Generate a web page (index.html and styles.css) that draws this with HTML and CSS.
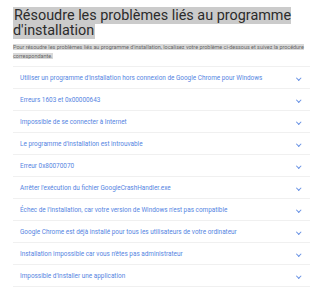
FILE: index.html
```html
<!DOCTYPE html>
<html lang="fr">
<head>
    <meta charset="UTF-8">
    <meta name="viewport" content="width=device-width, initial-scale=1.0">
    <title>Résoudre les problèmes liés au programme d'installation</title>
    <link rel="stylesheet" href="styles.css">
</head>
<body>

<div class="page">
    <h1><span class="sel">Résoudre les problèmes liés au programme d'installation</span></h1>
    <p class="intro"><span class="sel-light">Pour résoudre les problèmes liés au programme d'installation, localisez votre problème ci-dessous et suivez la procédure correspondante.</span></p>

    <!-- liste des problèmes -->
    <ul class="faq">
        <li><span>Utiliser un programme d'installation hors connexion de Google Chrome pour Windows</span><i class="chev"></i></li>
        <li><span>Erreurs 1603 et 0x00000643</span><i class="chev"></i></li>
        <li><span>Impossible de se connecter à Internet</span><i class="chev"></i></li>
        <li><span>Le programme d'installation est introuvable</span><i class="chev"></i></li>
        <li><span>Erreur 0x80070070</span><i class="chev"></i></li>
        <li><span>Arrêter l'exécution du fichier GoogleCrashHandler.exe</span><i class="chev"></i></li>
        <li><span>Échec de l'installation, car votre version de Windows n'est pas compatible</span><i class="chev"></i></li>
        <li><span>Google Chrome est déjà installé pour tous les utilisateurs de votre ordinateur</span><i class="chev"></i></li>
        <li><span>Installation impossible car vous n'êtes pas administrateur</span><i class="chev"></i></li>
        <li><span>Impossible d'installer une application</span><i class="chev"></i></li>
    </ul>
</div>

</body>
</html>
```

FILE: styles.css
```css
body {
    font-family: Roboto, "Liberation Sans", Arial, sans-serif;
    margin: 0;
    background: #fff;
}
.page {
    padding: 8px 10px 0 13px;
}
h1 {
    font-size: 14.4px;
    font-weight: 400;
    line-height: 15px;
    color: #2b2b2b;
    margin: 0 0 5px 0;
}
.sel {
    background: #cbcbcb;
    padding: 0 1px;
}
.intro {
    font-size: 5.45px;
    line-height: 9px;
    color: #666;
    margin: 0 0 5px 0;
}
.sel-light {
    background: #d9d9d9;
}
.faq {
    list-style: none;
    margin: 0;
    padding: 0;
    border-top: 1px solid #f0f0f0;
}
.faq li {
    display: flex;
    justify-content: space-between;
    align-items: center;
    height: 21px;
    padding: 0 10px 0 7px;
    border-bottom: 1px solid #f0f0f0;
    font-size: 6.4px;
    color: #5585e2;
}
.chev {
    width: 2.5px;
    height: 2.5px;
    border-right: 1px solid #6690e4;
    border-bottom: 1px solid #6690e4;
    transform: rotate(45deg);
    margin-top: 1px;
}
```
